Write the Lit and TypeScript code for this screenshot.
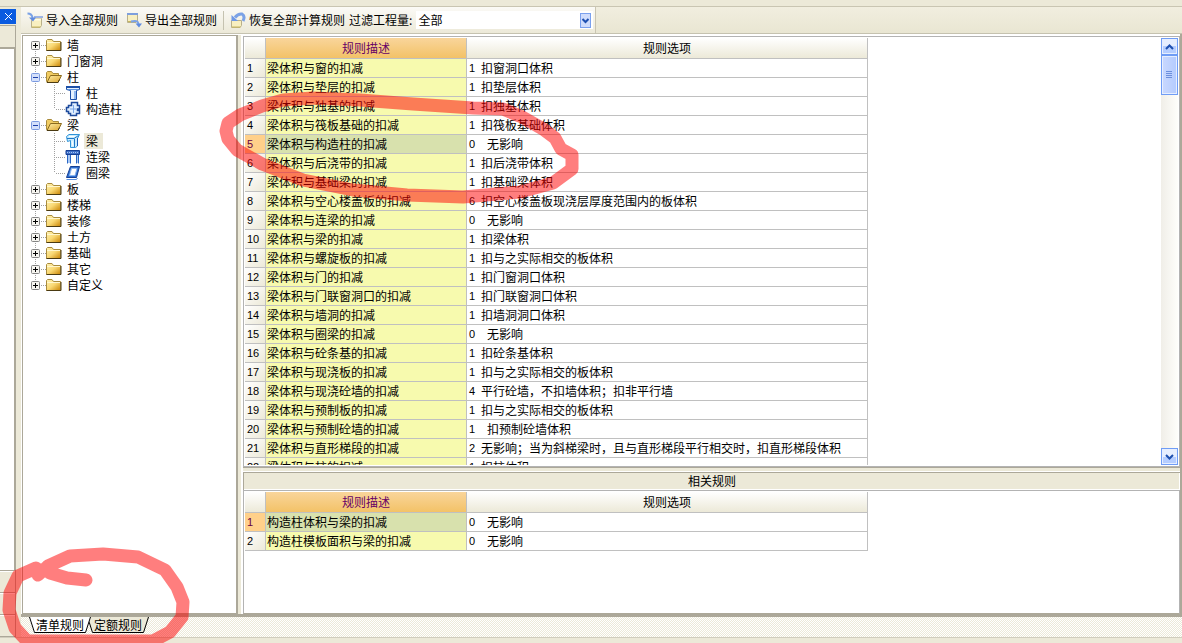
import { LitElement, html, css, svg, nothing } from "lit";
import { customElement, property, state } from "lit/decorators.js";
import { classMap } from "lit/directives/class-map.js";

type Rule = { name: string; code: string; text: string; indent?: boolean };
type Group = { name: string; children?: { name: string; icon: string }[] };

const r = (name: string, code: string, text: string, indent = false): Rule => ({ name, code, text, indent });

const RULES: Rule[] = [
  r("梁体积与窗的扣减", "1", "扣窗洞口体积"),
  r("梁体积与垫层的扣减", "1", "扣垫层体积"),
  r("梁体积与独基的扣减", "1", "扣独基体积"),
  r("梁体积与筏板基础的扣减", "1", "扣筏板基础体积"),
  r("梁体积与构造柱的扣减", "0", "无影响", true),
  r("梁体积与后浇带的扣减", "1", "扣后浇带体积"),
  r("梁体积与基础梁的扣减", "1", "扣基础梁体积"),
  r("梁体积与空心楼盖板的扣减", "6", "扣空心楼盖板现浇层厚度范围内的板体积"),
  r("梁体积与连梁的扣减", "0", "无影响", true),
  r("梁体积与梁的扣减", "1", "扣梁体积"),
  r("梁体积与螺旋板的扣减", "1", "扣与之实际相交的板体积"),
  r("梁体积与门的扣减", "1", "扣门窗洞口体积"),
  r("梁体积与门联窗洞口的扣减", "1", "扣门联窗洞口体积"),
  r("梁体积与墙洞的扣减", "1", "扣墙洞洞口体积"),
  r("梁体积与圈梁的扣减", "0", "无影响", true),
  r("梁体积与砼条基的扣减", "1", "扣砼条基体积"),
  r("梁体积与现浇板的扣减", "1", "扣与之实际相交的板体积"),
  r("梁体积与现浇砼墙的扣减", "4", "平行砼墙，不扣墙体积；扣非平行墙"),
  r("梁体积与预制板的扣减", "1", "扣与之实际相交的板体积"),
  r("梁体积与预制砼墙的扣减", "1", "扣预制砼墙体积", true),
  r("梁体积与直形梯段的扣减", "2", "无影响；当为斜梯梁时，且与直形梯段平行相交时，扣直形梯段体积"),
  r("梁体积与柱的扣减", "1", "扣柱体积"),
];

const RELATED: Rule[] = [
  r("构造柱体积与梁的扣减", "0", "无影响", true),
  r("构造柱模板面积与梁的扣减", "0", "无影响", true),
];

const GROUPS: Group[] = [
  { name: "墙" },
  { name: "门窗洞" },
  { name: "柱", children: [{ name: "柱", icon: "column" }, { name: "构造柱", icon: "tie" }] },
  {
    name: "梁",
    children: [
      { name: "梁", icon: "beam" },
      { name: "连梁", icon: "coupling" },
      { name: "圈梁", icon: "ring" },
    ],
  },
  { name: "板" },
  { name: "楼梯" },
  { name: "装修" },
  { name: "土方" },
  { name: "基础" },
  { name: "其它" },
  { name: "自定义" },
];

const folderClosed = html`<svg class="ico" viewBox="0 0 16 16" width="16" height="16" aria-hidden="true">
  <defs><linearGradient id="fc" x1="0" y1="0" x2="1" y2="1"><stop offset="0" stop-color="#fff3b4"/><stop offset=".5" stop-color="#f9d873"/><stop offset="1" stop-color="#c98405"/></linearGradient></defs>
  <path d="M.5 13.5V3.5L1.5 2.5H6L7.5 4.5H14.5V13.5Z" fill="url(#fc)" stroke="#a98b3c"/>
  <path d="M1 5.5H14" stroke="#fff6cc"/><path d="M.5 13.5H15V5" fill="none" stroke="#4a3a12"/>
</svg>`;

const folderOpen = html`<svg class="ico" viewBox="0 0 16 16" width="16" height="16" aria-hidden="true">
  <defs><linearGradient id="fo" x1="0" y1="0" x2="1" y2="1"><stop offset="0" stop-color="#fff0a8"/><stop offset="1" stop-color="#dba22c"/></linearGradient></defs>
  <path d="M.5 12.5V3.5L1.5 2.5H5.5L7 4.5H12.5V12.5Z" fill="#f1cc62" stroke="#a98b3c"/>
  <path d="M1 13.5L4.5 6.5H15.5L12 13.5Z" fill="url(#fo)" stroke="#8a6a1e"/><path d="M1 13.5H12L13.5 10.5" fill="none" stroke="#4a3a12"/>
</svg>`;

const shapes: Record<string, unknown> = {
  column: svg`<path d="M1.500 1.500H14.500V4.500L11.500 5.500V14.500H5.500V5.500L1.500 4.500Z" fill="#e6f2ff" stroke="#1c4fa8"/><path d="M1 2H15" stroke="#1c4fa8" stroke-width="2"/><path d="M3 4.500H13" stroke="#5b93e0"/><path d="M10 6V14" stroke="#8fb8f0" stroke-width="2"/>`,
  tie: svg`<path d="M6.500 1.500H12.500V4.500H14.500V8H12.500V9.500H14.500V12.500H11.500V14.500H5.500V12.500H3.500V10.500H1.500V6.500H3.500V4.500H6.500Z" fill="#e0efff" stroke="#1d4a9c" stroke-width="1.5"/><path d="M5 8H11M8.500 4V12" stroke="#7aa6e6"/>`,
  beam: svg`<path d="M1.500 3.500L4 1.500H14.500L12.500 5.500V13L10.500 14.500H5.500V7.500L2.500 8.500Z" fill="#c9ecfd" stroke="#2f93d8"/><path d="M2 5.500H9L13.500 2.500M9.500 6V14" fill="none" stroke="#1f78c8"/><path d="M4 3.500L10 3.500M7 8L8 13" stroke="#fff"/><path d="M12.500 5V13" stroke="#1c5fb8"/>`,
  coupling: svg`<path d="M1 1.500H14.500V5.500H1Z" fill="#3f70c8" stroke="#163f94"/><path d="M2 3.500H14" stroke="#a9c6f6" stroke-dasharray="1 1"/><path d="M4 6V14M12.500 6V14" stroke="#a9c8f4" stroke-width="2"/><path d="M2.500 6V14.500M5.500 6V14.500M11.500 6V14.500M13.500 6V14.500" stroke="#2a66c4"/>`,
  ring: svg`<path d="M5.500 1.500H14.500L11.500 12.500H1.500Z" fill="#2d6fd0" stroke="#163f94"/><path d="M6.500 3.500H12L10 10.500H4.500Z" fill="#fff" stroke="#8db6f0"/><path d="M1.500 14.500H11.500L12.500 13" fill="none" stroke="#5b8fdd"/>`,
};

const note = svg`<path d="M5.500 6.500H14.500V13.500L13 15.500H4.500V9Z" fill="#f8efc0" stroke="#b8b08a"/><path d="M6 7.500H14" stroke="#fffbe4" stroke-width="2"/><path d="M5 15H13.500" stroke="#c9b75e"/>`;
const toolIcons = {
  into: html`<svg viewBox="0 0 16 16" width="16" height="16" aria-hidden="true">${note}<path d="M7 5H16" stroke="#9db4e4" stroke-width="2"/><path d="M.5 1.500Q5 1.500 5.500 6" fill="none" stroke="#7ba2e6" stroke-width="2"/><path d="M2 5.500H9L6 9.500Z" fill="#5f8be0"/></svg>`,
  out: html`<svg viewBox="0 0 16 16" width="16" height="16" aria-hidden="true"><path d="M1.500 1.500H11.500V9L10 10.500H1.500Z" fill="#f8efc0" stroke="#b8b08a"/><path d="M1 2H12" stroke="#7e9fdd" stroke-width="2"/><path d="M2 9.500H10" stroke="#c9b75e"/><path d="M5 9.500Q12 7.500 12.500 12" fill="none" stroke="#7ba2e6" stroke-width="2"/><path d="M9.500 11.500H16L13 15.500Z" fill="#5f8be0"/></svg>`,
  undo: html`<svg viewBox="0 0 16 16" width="16" height="16" aria-hidden="true"><path d="M1.500 8.500H11.500V13.500L10 15.500H1.500Z" fill="#f8efc0" stroke="#b8b08a"/><path d="M2 15H10.500" stroke="#c9b75e"/><path d="M5 5.500Q8 1.500 12 2Q15.500 4 13 9" fill="none" stroke="#7ba2e6" stroke-width="3"/><path d="M1.500 3V9H8Z" fill="#6e98e6"/></svg>`,
};

const base = css`
  * { box-sizing: border-box; }
  button {
    margin: 0; padding: 0; border: 0; background: none; color: inherit;
    font: inherit; cursor: default; white-space: nowrap;
  }
  svg { display: block; }
`;

@customElement("rule-table")
class RuleTable extends LitElement {
  @property({ attribute: false }) rows: Rule[] = [];
  @property({ type: Number }) selected = 0;

  static styles = [base, css`
    :host { display: block; }
    table { border-collapse: separate; border-spacing: 0; table-layout: fixed; width: 623px; }
    .c-no { width: 21px; }
    .c-name { width: 201px; }
    th, td {
      height: 19px; padding: 0 2px; border: solid #c0c0c0; border-width: 0 1px 1px 0;
      font-weight: normal; text-align: left; line-height: 16px; white-space: nowrap;
    }
    td.name { padding-left: 1px; }
    thead th {
      height: 21px; text-align: center;
      background: linear-gradient(#fff, #ece9d8);
    }
    thead .name { background: linear-gradient(#f9d59b, #f3c267); color: #660066; }
    .no { font-family: "Liberation Sans", Arial, sans-serif; font-size: 11px; background: linear-gradient(to bottom right, #fff, #ece9d8); }
    td.name { background: #f7faae; }
    .sel .no { background: #ffd08a; color: #660044; }
    .sel td.name { background: #d8e1ad; }
    .code { display: inline-block; vertical-align: top; width: 12px; font-family: "Liberation Sans", Arial, sans-serif; font-size: 11px; }
    .code.wide { width: 18px; }
  `];

  render() {
    return html`<table>
      <colgroup><col class="c-no"><col class="c-name"><col></colgroup>
      <thead><tr><th></th><th class="name" scope="col">规则描述</th><th scope="col">规则选项</th></tr></thead>
      <tbody>
        ${this.rows.map((row, i) => html`<tr class=${classMap({ sel: i + 1 === this.selected })} @click=${() => (this.selected = i + 1)}>
          <th class="no" scope="row">${i + 1}</th>
          <td class="name">${row.name}</td>
          <td><span class=${classMap({ code: true, wide: !!row.indent })}>${row.code}</span>${row.text}</td>
        </tr>`)}
      </tbody>
    </table>`;
  }
}

@customElement("component-tree")
class ComponentTree extends LitElement {
  @state() open = new Set(["柱", "梁"]);
  @state() current = "beam";

  static styles = [base, css`
    :host { display: block; padding: 1px; }
    ul { list-style: none; margin: 0; padding: 0; }
    .row { display: flex; height: 16px; align-items: center; }
    .label { margin-left: 3px; padding: 0 2px; height: 16px; line-height: 16px; }
    .leaf { padding-right: 5px; }
    .picked { background: #ece9d8; }
    .ico { flex: none; }
    .dots { stroke: #a0a0a0; stroke-dasharray: 1 1; fill: none; }
  `];

  toggle(name: string) {
    const next = new Set(this.open);
    next.has(name) ? next.delete(name) : next.add(name);
    this.open = next;
  }

  gutter(g: Group, first: boolean, last: boolean) {
    const open = this.open.has(g.name) && g.children;
    return html`<button aria-label=${(open ? "收起" : "展开") + g.name} @click=${() => this.toggle(g.name)}>
      <svg width="22" height="16" aria-hidden="true">
        <path class="dots" d="M11.500 ${first ? 8 : 0}V${last ? 8 : 16}M17 8.500H22"/>
        <rect x="7.500" y="4.500" width="8" height="8" rx="1" fill=${open ? "#d4e0fb" : "#f6f5f0"} stroke=${open ? "#7b9ae0" : "#848484"}/>
        <path d=${open ? "M9 8.500H14" : "M9 8.500H14M11.500 6V11"} stroke=${open ? "#1c3fa8" : "#000"}/>
      </svg></button>`;
  }

  render() {
    return html`<ul>${GROUPS.map((g, gi) => {
      const open = this.open.has(g.name) && g.children;
      const kids = g.children ?? [];
      return html`<li>
        <div class="row">
          ${this.gutter(g, gi === 0, gi === GROUPS.length - 1)}
          ${open ? folderOpen : folderClosed}<span class="label">${g.name}</span>
        </div>
        ${open ? html`<ul>${kids.map((k, i) => html`<li class="row">
          <svg class="ico" width="41" height="16" aria-hidden="true"><path class="dots" d="M11.500 0V16M30.500 0V${i === kids.length - 1 ? 8 : 16}M32 8.500H41"/></svg>
          <svg class="ico" width="16" height="16" viewBox="0 0 16 16" aria-hidden="true">${shapes[k.icon]}</svg>
          <button class=${classMap({ label: true, leaf: true, picked: this.current === k.icon })} @click=${() => (this.current = k.icon)}>${k.name}</button>
        </li>`)}</ul>` : nothing}
      </li>`;
    })}</ul>`;
  }
}

@customElement("app-root")
class AppRoot extends LitElement {
  @state() tab = 0;

  static styles = [base, css`
    :host {
      display: flex; flex-direction: column; position: relative; height: 100vh; overflow: hidden;
      background: #ece9d8; color: #000;
      font: 12px/16px "Noto Sans CJK SC", "Liberation Sans", sans-serif;
    }
    .top { flex: none; height: 7px; border-bottom: 1px solid #c9c5b2; }
    .bottom { flex: none; height: 6px; border-top: 1px solid #d0cdbd; }
    .body { flex: 1; min-height: 0; display: flex; gap: 5px; }

    .dock { flex: none; width: 16px; padding-top: 2px; display: flex; flex-direction: column; }
    .close { height: 15px; background: #0a5be0; display: flex; align-items: center; justify-content: center; }
    .dock-head { height: 23px; margin-top: 1px; border: solid #aca899; border-width: 1px 1px 1px 0; }
    .dock-view { flex: 1; background: #fff; border: solid #aca899; border-width: 1px 2px 1px 0; }
    .dock-row { height: 22px; border: solid #aca899; border-width: 0 1px 1px 0; box-shadow: inset 0 1px #fff; }

    .main { flex: 1; min-width: 0; display: flex; flex-direction: column; }
    .toolstrip { flex: none; height: 27px; border-bottom: 1px solid #c5c2b0; display: flex; background: linear-gradient(#f1eedf, #e9e6d2); }
    .toolbar {
      display: flex; align-items: center; padding: 0 2px 0 6px;
      border-right: 1px solid #c9c5b2; background: linear-gradient(#fbfaf6, #ece9d8);
    }
    .tool { display: flex; align-items: center; gap: 3px; height: 24px; }
    .tool + .tool { margin-left: 8px; }
    .sep { width: 1px; height: 19px; margin: 0 6px; background: #c5c2b0; }
    .filter { display: flex; align-items: center; margin-left: 4px; gap: 4px; white-space: nowrap; }
    .combo { display: grid; width: 177px; height: 18px; background: #fff; align-items: center; }
    .combo > * { grid-area: 1 / 1; }
    .combo select {
      appearance: none; width: 100%; height: 18px; margin: 0; padding: 0 16px 0 2px;
      border: 0; background: none; font: inherit; line-height: 18px; color: inherit;
    }
    .combo svg { justify-self: end; margin-right: 2px; pointer-events: none; }

    .content {
      flex: 1; min-height: 0; display: flex; gap: 3px;
      border: solid #aca899; border-width: 0 2px 3px 0; box-shadow: inset 1px 1px #fff; padding: 1px 0 0 1px;
    }
    .tree { flex: none; width: 216px; background: #fff; border: 1px solid #aca899; border-right-width: 2px; }
    .right { flex: 1; min-width: 0; display: flex; flex-direction: column; border: solid #fff; border-width: 1px 0 0 2px; }
    .pane { background: #fff; border: 1px solid #b3b3b3; padding: 1px; display: flex; justify-content: space-between; overflow: hidden; }
    .upper { flex: 1; min-height: 0; }
    .scroll { flex: 1; overflow: hidden; }
    .split { flex: none; height: 5px; border-top: 1px solid #aca899; border-bottom: 1px solid #fff; }
    .title {
      flex: none; height: 18px; line-height: 16px; text-align: center; border: solid #aca899;
      border-width: 1px 0 0 1px; box-shadow: inset -1px -1px #fff; font-size: 12px; font-weight: normal; margin: 0;
    }
    .lower { flex: none; height: 124px; border-bottom-color: #aca899; }

    .bar { flex: none; width: 17px; display: flex; flex-direction: column; background: linear-gradient(to right, #f0eee8, #fefefb); }
    .arrow, .thumb {
      border: 1px solid #6f9cf5; box-shadow: inset 0 0 0 1px #e6eeff; display: grid; place-items: center;
      background: linear-gradient(#e6eeff 50%, #b5cdff 50%);
    }
    .arrow { height: 17px; }
    .thumb { height: 40px; background: linear-gradient(to right, #c9d8fe, #b4cbfe); }
    .track { flex: 1; }

    .tabs {
      flex: none; height: 20px; display: flex; padding-left: 8px;
      background: repeating-conic-gradient(#ece9d8 0 25%, #fff 0 50%) 0 0 / 2px 2px;
    }
    .tab { display: grid; width: 62px; height: 16px; line-height: 15px; text-align: center; }
    .tab > * { grid-area: 1 / 1; }
    .tab + .tab { margin-left: -4px; }
    .tab polygon { fill: #ece9d8; }
    .tab path { fill: none; stroke: #000; }
    .tab.on { z-index: 1; }
    .tab.on polygon { fill: #fff; }

    .marks { position: absolute; left: 0; top: 0; pointer-events: none; opacity: .5; z-index: 2; }
  `];

  scrollRules(dy: number) {
    this.renderRoot.querySelector(".scroll")?.scrollBy(0, dy);
  }

  render() {
    return html`
      <div class="top"></div>
      <div class="body">
        <div class="dock">
          <button class="close" aria-label="关闭"><svg width="9" height="9" aria-hidden="true"><path d="M1 1L8 8M8 1L1 8" stroke="#fff"/></svg></button>
          <div class="dock-head"></div>
          <div class="dock-view"></div>
          <div class="dock-row"></div><div class="dock-row"></div><div class="dock-row"></div>
        </div>
        <div class="main">
          <div class="toolstrip">
            <div class="toolbar">
              <button class="tool">${toolIcons.into}导入全部规则</button>
              <button class="tool">${toolIcons.out}导出全部规则</button>
              <span class="sep"></span>
              <button class="tool">${toolIcons.undo}恢复全部计算规则</button>
              <div class="filter">
                <label for="qty">过滤工程量:</label>
                <div class="combo">
                  <select id="qty"><option>全部</option></select>
                  <svg width="11" height="15" aria-hidden="true"><rect x=".5" y=".5" width="10" height="14" fill="#cfdcfc" stroke="#7aa0ee"/><path d="M2.500 6L5.500 9L8.500 6" fill="none" stroke="#1d4fb0" stroke-width="2"/></svg>
                </div>
              </div>
            </div>
          </div>
          <div class="content">
            <component-tree class="tree"></component-tree>
            <div class="right">
              <div class="pane upper">
                <div class="scroll"><rule-table .rows=${RULES} selected="5"></rule-table></div>
                <div class="bar">
                  <button class="arrow" aria-label="向上滚动" @click=${() => this.scrollRules(-19)}><svg width="9" height="6" aria-hidden="true"><path d="M1 5L4.500 1.500L8 5" fill="none" stroke="#1d4fb0" stroke-width="2"/></svg></button>
                  <div class="thumb"><svg width="7" height="8" aria-hidden="true"><path d="M0 .5H6M0 2.500H6M0 4.500H6M0 6.500H6" stroke="#6d8fdc"/></svg></div>
                  <div class="track"></div>
                  <button class="arrow" aria-label="向下滚动" @click=${() => this.scrollRules(19)}><svg width="9" height="6" aria-hidden="true"><path d="M1 1L4.500 4.500L8 1" fill="none" stroke="#1d4fb0" stroke-width="2"/></svg></button>
                </div>
              </div>
              <div class="split"></div>
              <h2 class="title">相关规则</h2>
              <div class="pane lower"><rule-table .rows=${RELATED} selected="1"></rule-table></div>
            </div>
          </div>
          <div class="tabs">
            ${["清单规则", "定额规则"].map((t, i) => html`<button class=${classMap({ tab: true, on: this.tab === i })} @click=${() => (this.tab = i)}>
              <svg width="62" height="16" aria-hidden="true"><polygon points="0,0 5,15 57,15 62,0"/><path d="M.5 0L5.500 15.500H56.500L61.500 0"/></svg><span>${t}</span>
            </button>`)}
          </div>
        </div>
      </div>
      <div class="bottom"></div>
      <svg class="marks" width="600" height="643" fill="none" stroke="#f00" stroke-width="13" stroke-linecap="round" stroke-linejoin="round" aria-hidden="true">
        <path d="M226 131L228 123L240 115L262 106L283 100L313 98L360 100L413 104L473 108L503 109L522 117L543 129L555 138L561 149L572 155L572 169L553 183L520 192L463 197L407 195L353 190L303 180L262 164L237 150L228 139Z"/>
        <path d="M86 580L67 578L50 573L48 566L70 556L103 554L138 557L165 570L177 587L183 602L182 617L170 632L153 641L27 641L15 628L9 610L10 593L18 576L36 568L38 575L48 566"/>
      </svg>
    `;
  }
}
